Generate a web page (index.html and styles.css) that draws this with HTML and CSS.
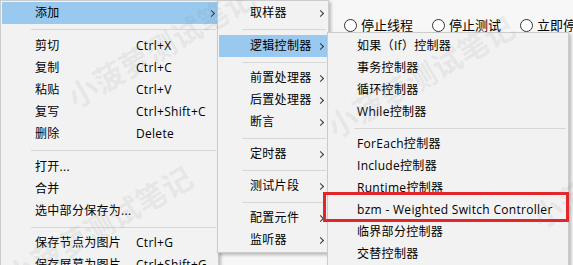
FILE: index.html
```html
<!DOCTYPE html>
<html lang="zh-CN">
<head>
    <meta charset="UTF-8">
    <title>添加 - 逻辑控制器</title>
    <link rel="stylesheet" href="styles.css">
</head>
<body>

<div class="screen">
    <!-- 窗口背后的面板 -->
    <div class="backdrop">
        <div class="radios">
            <span class="radio"><span class="dot"></span>停止线程</span>
            <span class="radio"><span class="dot"></span>停止测试</span>
            <span class="radio"><span class="dot"></span>立即停止线程</span>
        </div>
    </div>

    <!-- 右键菜单 -->
    <ul class="menu menu-main">
        <li class="item active"><span class="label">添加</span><span class="arrow"></span></li>
        <li class="sep"></li>
        <li class="item"><span class="label">剪切</span><span class="key">Ctrl+X</span></li>
        <li class="item"><span class="label">复制</span><span class="key">Ctrl+C</span></li>
        <li class="item"><span class="label">粘贴</span><span class="key">Ctrl+V</span></li>
        <li class="item"><span class="label">复写</span><span class="key">Ctrl+Shift+C</span></li>
        <li class="item"><span class="label">删除</span><span class="key">Delete</span></li>
        <li class="sep"></li>
        <li class="item"><span class="label">打开...</span></li>
        <li class="item"><span class="label">合并</span></li>
        <li class="item"><span class="label">选中部分保存为...</span></li>
        <li class="sep short"></li>
        <li class="item"><span class="label">保存节点为图片</span><span class="key">Ctrl+G</span></li>
        <li class="item"><span class="label">保存屏幕为图片</span><span class="key">Ctrl+Shift+G</span></li>
    </ul>

    <!-- 添加 子菜单 -->
    <ul class="menu menu-add">
        <li class="item"><span class="label">取样器</span><span class="arrow"></span></li>
        <li class="sep"></li>
        <li class="item active"><span class="label">逻辑控制器</span><span class="arrow"></span></li>
        <li class="sep short"></li>
        <li class="item"><span class="label">前置处理器</span><span class="arrow"></span></li>
        <li class="item"><span class="label">后置处理器</span><span class="arrow"></span></li>
        <li class="item"><span class="label">断言</span><span class="arrow"></span></li>
        <li class="sep short"></li>
        <li class="item"><span class="label">定时器</span><span class="arrow"></span></li>
        <li class="sep short"></li>
        <li class="item"><span class="label">测试片段</span><span class="arrow"></span></li>
        <li class="sep short"></li>
        <li class="item"><span class="label">配置元件</span><span class="arrow"></span></li>
        <li class="item"><span class="label">监听器</span><span class="arrow"></span></li>
    </ul>

    <!-- 逻辑控制器 子菜单 -->
    <ul class="menu menu-logic">
        <li class="item"><span class="label">如果（If）控制器</span></li>
        <li class="item"><span class="label">事务控制器</span></li>
        <li class="item"><span class="label">循环控制器</span></li>
        <li class="item"><span class="label">While控制器</span></li>
        <li class="sep short"></li>
        <li class="item"><span class="label">ForEach控制器</span></li>
        <li class="item"><span class="label">Include控制器</span></li>
        <li class="item"><span class="label">Runtime控制器</span></li>
        <li class="item"><span class="label">bzm - Weighted Switch Controller</span></li>
        <li class="item"><span class="label">临界部分控制器</span></li>
        <li class="item"><span class="label">交替控制器</span></li>
    </ul>

    <!-- 标注框 -->
    <div class="highlight-box"></div>

    <!-- 水印 -->
    <div class="watermark wm-1">小菠萝测试笔记</div>
    <div class="watermark wm-2">小菠萝测试笔记</div>
    <div class="watermark wm-3">小菠萝测试笔记</div>
    <div class="watermark wm-4">小菠萝测试笔记</div>
</div>

</body>
</html>
```

FILE: styles.css
```css
body {
    margin: 0;
    font-family: "Open Sans", "Noto Sans CJK SC", sans-serif;
    font-size: 12px;
    color: #000;
    background: #f7f7f7;
}
.screen {
    position: relative;
    width: 573px;
    height: 265px;
    overflow: hidden;
    background: #f7f7f7;
}

/* 背景面板 */
.backdrop {
    padding: 17px 0 0 344px;
}
.radios {
    display: flex;
    gap: 19px;
    font-size: 13px;
    white-space: nowrap;
}
.radio {
    display: flex;
    align-items: center;
    gap: 4px;
    line-height: 16px;
}
.dot {
    width: 11px;
    height: 11px;
    border: 1px solid #333;
    border-radius: 50%;
    background: #fff;
}

/* 菜单 */
.menu {
    position: absolute;
    margin: 0;
    padding: 1px 0;
    list-style: none;
    background: #f2f2f2;
    border: 1px solid #cccccc;
    box-shadow: 2px 2px 3px rgba(0, 0, 0, 0.25);
    box-sizing: border-box;
    letter-spacing: 0.3px;
}
.menu-main {
    left: 0;
    top: 0;
    width: 219px;
    height: 290px;
}
.menu-add {
    left: 217px;
    top: 0;
    width: 112px;
}
.menu-logic {
    left: 327px;
    top: 32px;
    width: 242px;
    height: 300px;
    padding-top: 2px;
}
.item {
    display: flex;
    align-items: center;
    height: 22px;
    line-height: 22px;
    white-space: nowrap;
}
.menu-main .item {
    padding-left: 33px;
    margin: 0 1px;
}
.menu-add .item {
    padding-left: 31px;
    margin: 0 1px;
}
.menu-logic .item {
    padding-left: 29px;
}
.item.active {
    background: #99c9ef;
}
.label {
    flex: none;
}
.menu-main .label {
    width: 101px;
}
.key {
    flex: none;
}
.arrow {
    margin-left: auto;
    margin-right: 3px;
    width: 4px;
    height: 4px;
    border-top: 1px solid #333;
    border-right: 1px solid #333;
    transform: rotate(45deg);
}
.menu-add .arrow {
    margin-right: 4px;
}
.sep {
    height: 11px;
    position: relative;
}
.sep.short {
    height: 10px;
}
.sep::after {
    content: "";
    position: absolute;
    left: 30px;
    right: 2px;
    top: 5px;
    border-top: 1px solid #d7d7d7;
}
.menu-add .sep::after {
    left: 24px;
}
.menu-logic .sep::after {
    left: 26px;
}

/* 红色标注框 */
.highlight-box {
    position: absolute;
    left: 323px;
    top: 192px;
    width: 246px;
    height: 30px;
    border: 3px solid #e4262b;
    box-sizing: border-box;
}

/* 水印 */
.watermark {
    position: absolute;
    font-size: 30px;
    line-height: 40px;
    font-weight: bold;
    color: rgba(120, 120, 120, 0.1);
    white-space: nowrap;
    transform: rotate(-30deg);
    transform-origin: left center;
}
.wm-1 {
    left: 70px;
    top: 80px;
}
.wm-2 {
    left: 330px;
    top: 110px;
}
.wm-3 {
    left: 8px;
    top: 260px;
}
.wm-4 {
    left: 535px;
    top: 200px;
}
```
